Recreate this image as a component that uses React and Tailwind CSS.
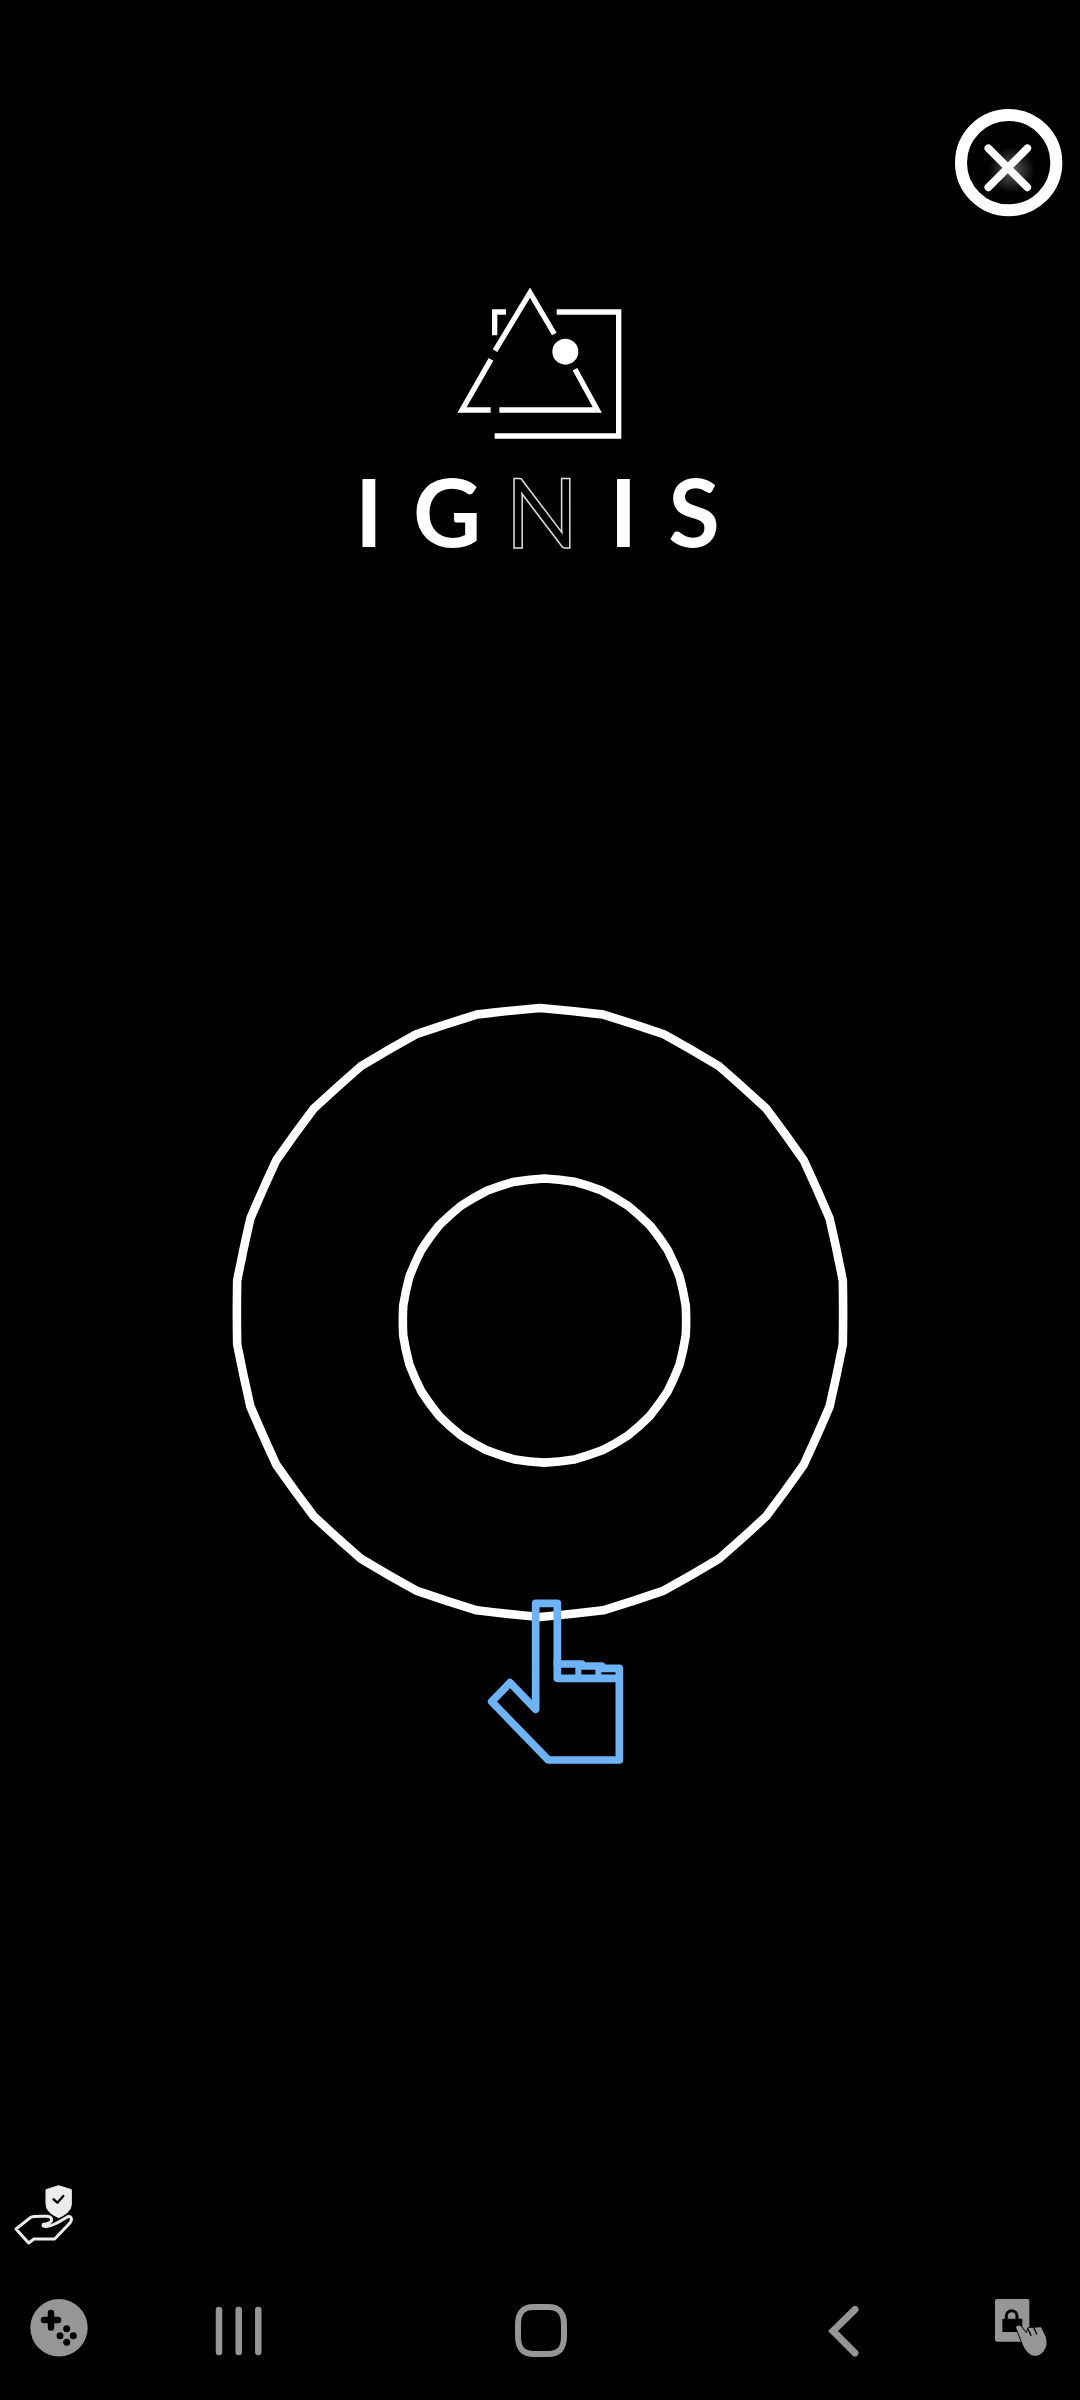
const ngon = (cx, cy, r, bulge) => {
  const pt = (deg, rad) => {
    const a = (deg * Math.PI) / 180;
    return `${(cx + rad * Math.sin(a)).toFixed(1)} ${(cy - rad * Math.cos(a)).toFixed(1)}`;
  };
  let d = `M${pt(0, r)}`;
  for (let i = 0; i < 30; i++) {
    d += ` Q${pt(i * 12 + 6, r * bulge)} ${pt((i + 1) * 12, r)}`;
  }
  return d + " Z";
};
const grey = "#969696";

function CloseIcon() {
  return (
    <svg width="150" height="140" viewBox="0 0 450 420" fill="none">
      <defs>
        <radialGradient id="glow">
          <stop offset="0%" stopColor="#fff" stopOpacity="0.38" />
          <stop offset="100%" stopColor="#fff" stopOpacity="0" />
        </radialGradient>
      </defs>
      <circle cx="236" cy="218" r="143" stroke="#fff" strokeWidth="36" />
      <circle cx="245" cy="240" r="70" fill="url(#glow)" />
      <path d="M175 175 L292 292 M292 175 L175 292" stroke="#fff" strokeWidth="23" strokeLinecap="round" />
    </svg>
  );
}

function LogoMark() {
  return (
    <svg className="absolute left-0 top-0" width="400" height="290" viewBox="0 0 1200 870" fill="none" stroke="#fff" strokeWidth="16">
      <path d="M650 126 H836 V498 H464" />
      <path d="M498 126 H464 V196" />
      <path d="M465 242 L570 68 L643 192" />
      <path d="M453 268 L366 420 H452" />
      <path d="M478 420 H772 L705 298" />
      <circle cx="676" cy="245" r="39" fill="#fff" stroke="none" />
    </svg>
  );
}

function Logo() {
  const letter = "block text-[94px] leading-[95px] font-bold text-white";
  return (
    <div className="relative ml-[340px] mt-[40px] h-[290px] w-[400px]">
      <LogoMark />
      <div className="absolute left-[15px] top-[193px] flex items-start font-['Lato',sans-serif]">
        <span className={letter}>I</span>
        <span className={`${letter} ml-[30px]`}>G</span>
        <span className="ml-[24px] block text-[96px] font-normal leading-[95px] text-transparent [-webkit-text-stroke:1.5px_#dddddd]">N</span>
        <span className={`${letter} ml-[31px]`}>I</span>
        <span className={`${letter} ml-[31px]`}>S</span>
      </div>
    </div>
  );
}

function Hand() {
  return (
    <svg className="absolute left-[250px] top-[590px]" width="170" height="200" viewBox="0 0 510 600" fill="none" stroke="#6cb4f5" strokeWidth="23" strokeLinejoin="round">
      <path d="M197 70 H262 V252 H335 V258 H395 V265 H448 V540 H235 L65 365 L120 308 L197 388 Z" />
      <path d="M262 240 V295 H448" />
      <path d="M325 258 V295 M385 265 V295" strokeWidth="18" />
    </svg>
  );
}

function Rings() {
  return (
    <div className="relative ml-[220px] mt-[430px] h-[640px] w-[640px]">
      <svg width="640" height="640" viewBox="0 0 1568 1568" fill="none" stroke="#fff" strokeWidth="21" strokeLinejoin="round">
        <path d={ngon(784, 790, 746, 0.9965)} />
        <path d={ngon(795, 810, 348, 1.0)} />
      </svg>
      <Hand />
    </div>
  );
}

function ShieldHand() {
  return (
    <svg className="ml-[10px]" width="70" height="80" viewBox="0 0 210 240" fill="none">
      <path d="M146 32 L184 44 V88 Q184 112 146 128 Q108 112 108 88 V44 Z" fill="#ececec" stroke="#ececec" strokeWidth="3" strokeLinejoin="round" />
      <path d="M131 73 L142 83 L160 63" stroke="#000" strokeWidth="7" strokeLinecap="round" strokeLinejoin="round" />
      <path d="M18 162 L62 127 Q72 122 112 124 Q128 126 124 138 Q120 146 100 148 Q96 156 112 154 Q130 152 168 128 Q180 120 184 130 Q186 138 176 148 L134 192 H72 L56 204 Z" stroke="#ececec" strokeWidth="9" strokeLinejoin="round" />
    </svg>
  );
}

function NavBar() {
  return (
    <div className="flex h-[110px]">
      <svg className="ml-[20px]" width="80" height="110" viewBox="20 2290 80 110">
        <circle cx="59" cy="2327.7" r="28.7" fill={grey} />
        <path d="M51 2313 V2327.5 M44 2320 H58" stroke="#000" strokeWidth="6.5" strokeLinecap="round" fill="none" />
        <circle cx="66.7" cy="2328.7" r="3.5" fill="#000" />
        <circle cx="60" cy="2335.7" r="3.5" fill="#000" />
        <circle cx="73.3" cy="2335.7" r="3.5" fill="#000" />
        <circle cx="66.7" cy="2342.3" r="3.5" fill="#000" />
      </svg>
      <svg className="ml-[110px]" width="60" height="110" viewBox="210 2290 60 110" stroke={grey} strokeWidth="6.5" strokeLinecap="round">
        <path d="M219 2310 V2352 M238.7 2310 V2352 M258.3 2310 V2352" />
      </svg>
      <svg className="ml-[235px]" width="72" height="110" viewBox="505 2290 72 110" fill="none" stroke={grey} strokeWidth="6">
        <path d="M534 2307 H548 C560 2307 564 2313 564 2325 V2336 C564 2348 560 2354 548 2354 H534 C522 2354 518 2348 518 2336 V2325 C518 2313 522 2307 534 2307 Z" />
      </svg>
      <svg className="ml-[243px]" width="50" height="110" viewBox="820 2290 50 110" fill="none" stroke={grey} strokeWidth="7" strokeLinecap="round" strokeLinejoin="miter">
        <path d="M855 2309.5 L833 2331 L855 2353" />
      </svg>
      <svg className="ml-[115px]" width="70" height="80" viewBox="0 0 210 240">
        <rect x="30" y="27" width="103" height="128" rx="6" fill={grey} />
        <rect x="52" y="86" width="60" height="40" rx="3" fill="#000" />
        <path d="M64 90 V78 A16 16 0 0 1 96 78 V90" fill="none" stroke="#000" strokeWidth="9" />
        <path d="M93 112 Q98 103 107 108 L124 130 L130 114 L168 112 L182 140 Q190 165 175 185 Q155 205 135 193 Q118 180 112 160 Z" fill={grey} stroke="#000" strokeWidth="5" paintOrder="stroke" strokeLinejoin="round" />
        <path d="M128 116 L138 136 M146 112 L155 132" stroke="#000" strokeWidth="4" strokeLinecap="round" />
      </svg>
    </div>
  );
}

export default function App() {
  return (
    <div className="flex h-[2400px] w-[1080px] flex-col overflow-hidden bg-black">
      <div className="flex justify-end pt-[90px]">
        <CloseIcon />
      </div>
      <Logo />
      <Rings />
      <div className="mt-auto pb-[35px]">
        <ShieldHand />
      </div>
      <NavBar />
    </div>
  );
}
